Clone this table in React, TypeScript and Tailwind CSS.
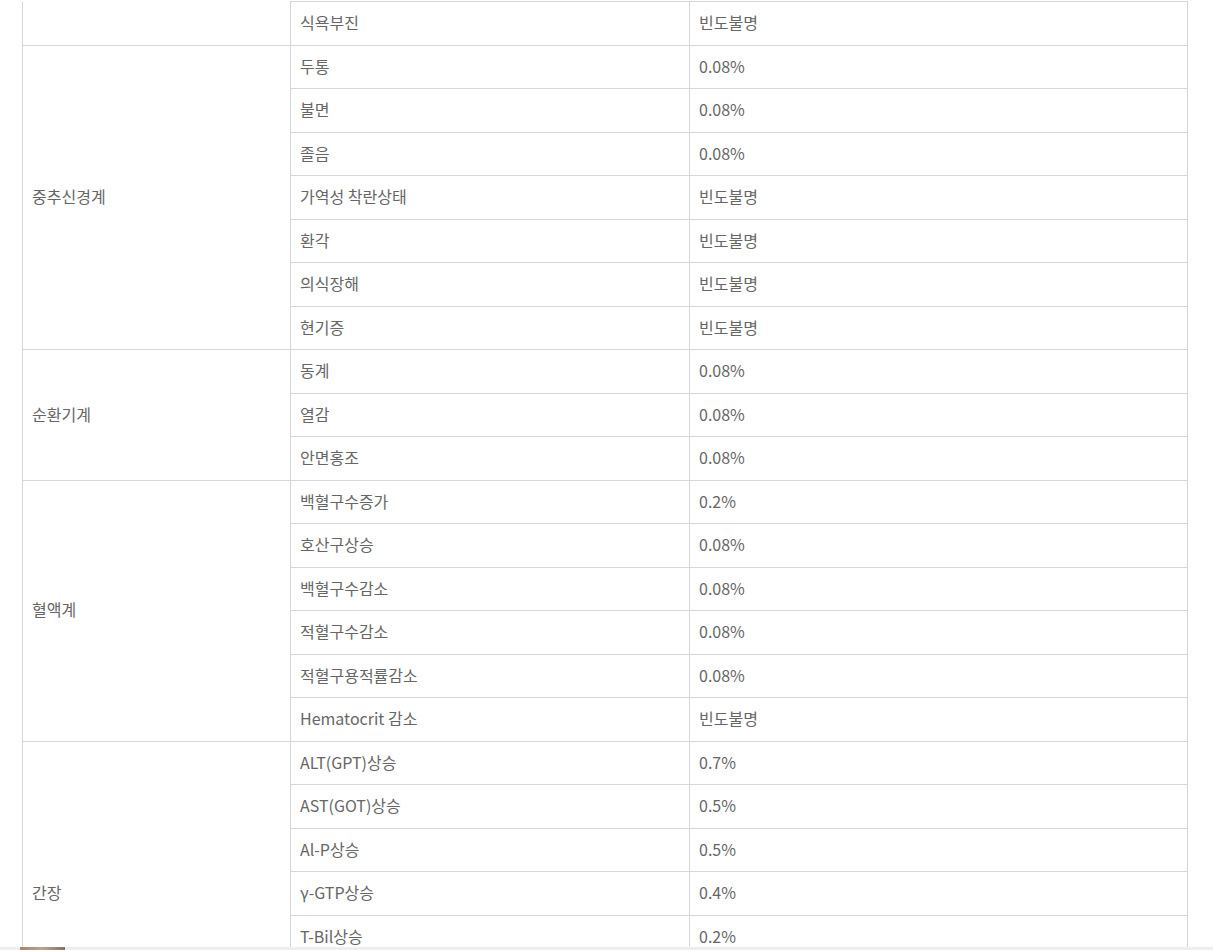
import React from "react";

type Group = { name: string; rows: [string, string][] };

const groups: Group[] = [
  { name: "", rows: [["식욕부진", "빈도불명"]] },
  {
    name: "중추신경계",
    rows: [
      ["두통", "0.08%"],
      ["불면", "0.08%"],
      ["졸음", "0.08%"],
      ["가역성 착란상태", "빈도불명"],
      ["환각", "빈도불명"],
      ["의식장해", "빈도불명"],
      ["현기증", "빈도불명"],
    ],
  },
  {
    name: "순환기계",
    rows: [
      ["동계", "0.08%"],
      ["열감", "0.08%"],
      ["안면홍조", "0.08%"],
    ],
  },
  {
    name: "혈액계",
    rows: [
      ["백혈구수증가", "0.2%"],
      ["호산구상승", "0.08%"],
      ["백혈구수감소", "0.08%"],
      ["적혈구수감소", "0.08%"],
      ["적혈구용적률감소", "0.08%"],
      ["Hematocrit 감소", "빈도불명"],
    ],
  },
  {
    name: "간장",
    rows: [
      ["ALT(GPT)상승", "0.7%"],
      ["AST(GOT)상승", "0.5%"],
      ["Al-P상승", "0.5%"],
      ["γ-GTP상승", "0.4%"],
      ["T-Bil상승", "0.2%"],
      ["\u00a0", "\u00a0"],
      ["\u00a0", "\u00a0"],
    ],
  },
];

const cell = "border border-[#d6d6d6] px-[9px] pt-[9px] pb-[11px] text-left align-middle font-normal";

export default function App() {
  return (
    <div
      className="min-h-screen bg-white text-[#666666] text-[16px] leading-[22.5px]"
      style={{ fontFamily: '"Noto Sans CJK KR", "Noto Sans", sans-serif' }}
    >
      <div className="pl-[22px] pr-[26px] pt-px">
        <table className="w-[1165px] border-collapse table-fixed">
          <colgroup>
            <col className="w-[268px]" />
            <col className="w-[399px]" />
            <col className="w-[498px]" />
          </colgroup>
          <tbody>
            {groups.map((g, gi) =>
              g.rows.map((r, ri) => (
                <tr key={`${gi}-${ri}`}>
                  {ri === 0 && (
                    <td rowSpan={g.rows.length} className={`${cell} ${gi === 0 ? "border-t-0" : ""}`}>
                      {g.name}
                    </td>
                  )}
                  <td className={cell}>{r[0]}</td>
                  <td className={cell}>{r[1]}</td>
                </tr>
              ))
            )}
          </tbody>
        </table>
      </div>

      <div className="fixed bottom-0 left-0 right-0 h-[3px] bg-[#eeeeee]">
        <div className="absolute left-[20px] top-0 h-[3px] w-[45px] bg-gradient-to-r from-[#a7866c] via-[#c4a185] to-[#8f6e55]" />
      </div>
    </div>
  );
}
